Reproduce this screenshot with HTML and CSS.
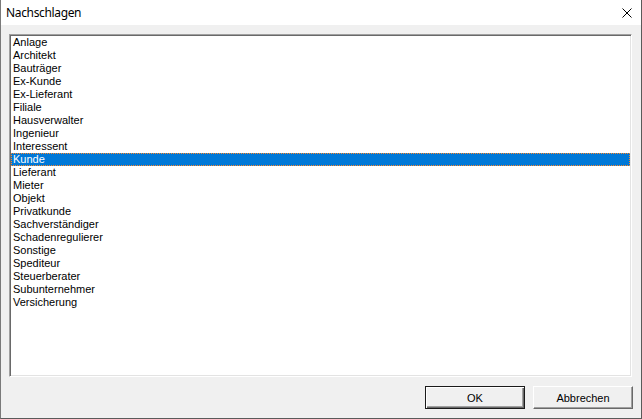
FILE: index.html
```html
<!DOCTYPE html>
<html lang="de">
<head>
<meta charset="utf-8">
<title>Nachschlagen</title>
<link rel="stylesheet" href="styles.css">
</head>
<body>
<div class="window">
  <div class="titlebar">
    <span class="title">Nachschlagen</span>
    <span class="close" aria-label="Schließen">
      <svg width="10" height="10" viewBox="0 0 10 10"><path d="M0.5 0.5 L9.5 9.5 M9.5 0.5 L0.5 9.5" stroke="#000" stroke-width="1" fill="none"/></svg>
    </span>
  </div>
  <div class="content">
    <ul class="listbox">
      <li>Anlage</li>
      <li>Architekt</li>
      <li>Bauträger</li>
      <li>Ex-Kunde</li>
      <li>Ex-Lieferant</li>
      <li>Filiale</li>
      <li>Hausverwalter</li>
      <li>Ingenieur</li>
      <li>Interessent</li>
      <li class="selected">Kunde</li>
      <li>Lieferant</li>
      <li>Mieter</li>
      <li>Objekt</li>
      <li>Privatkunde</li>
      <li>Sachverständiger</li>
      <li>Schadenregulierer</li>
      <li>Sonstige</li>
      <li>Spediteur</li>
      <li>Steuerberater</li>
      <li>Subunternehmer</li>
      <li>Versicherung</li>
    </ul>
  </div>
  <div class="footer">
    <button class="btn default">OK</button>
    <button class="btn">Abbrechen</button>
  </div>
</div>
</body>
</html>
```

FILE: styles.css
```css
html, body {
  margin: 0;
  padding: 0;
  background: #f0f0f0;
}

.window {
  box-sizing: border-box;
  width: 642px;
  height: 419px;
  display: flex;
  flex-direction: column;
  background: #f0f0f0;
  border-left: 1px solid #7a7a7a;
  border-right: 1px solid #5a5a5a;
  border-bottom: 1px solid #5a5a5a;
}

.titlebar {
  height: 25px;
  flex: none;
  background: #ffffff;
  display: flex;
  align-items: center;
  justify-content: space-between;
  padding: 0 9px 0 5px;
  font-family: "Noto Sans", "Open Sans", sans-serif;
  font-size: 12px;
  letter-spacing: -0.35px;
  color: #000;
}

.title {
  line-height: 25px;
}

.close {
  display: flex;
  width: 10px;
  height: 10px;
  margin-top: 1px;
}

.content {
  padding: 9px 9px 0 8px;
  flex: none;
}

.listbox {
  box-sizing: border-box;
  list-style: none;
  margin: 0;
  padding: 0;
  height: 343px;
  background: #ffffff;
  border-top: 1px solid #a0a0a0;
  border-left: 1px solid #a0a0a0;
  border-right: 1px solid #ffffff;
  border-bottom: 1px solid #ffffff;
  box-shadow: inset 1px 1px 0 #696969, inset -1px -1px 0 #e3e3e3;
  padding: 1px;
  font-family: "Liberation Sans", Arial, sans-serif;
  font-size: 11px;
  color: #000;
}

.listbox li {
  height: 13px;
  line-height: 13px;
  padding-left: 2px;
  white-space: nowrap;
}

.listbox li.selected {
  background: #0078d7;
  color: #ffffff;
  outline: 1px dotted #ff8728;
  outline-offset: -1px;
}

.footer {
  flex: none;
  display: flex;
  justify-content: flex-end;
  gap: 8px;
  padding: 9px 8px 9px 0;
}

.btn {
  box-sizing: border-box;
  width: 100px;
  height: 23px;
  margin: 0;
  padding: 0;
  background: #f0f0f0;
  font-family: "Liberation Sans", Arial, sans-serif;
  font-size: 11px;
  color: #000;
  border-top: 1px solid #ffffff;
  border-left: 1px solid #ffffff;
  border-right: 1px solid #696969;
  border-bottom: 1px solid #696969;
  box-shadow: inset -1px -1px 0 #a0a0a0;
}

.btn.default {
  border: 1px solid #1a1a1a;
  box-shadow: inset 1px 1px 0 #ffffff, inset -1px -1px 0 #696969, inset -2px -2px 0 #a0a0a0;
}
```
